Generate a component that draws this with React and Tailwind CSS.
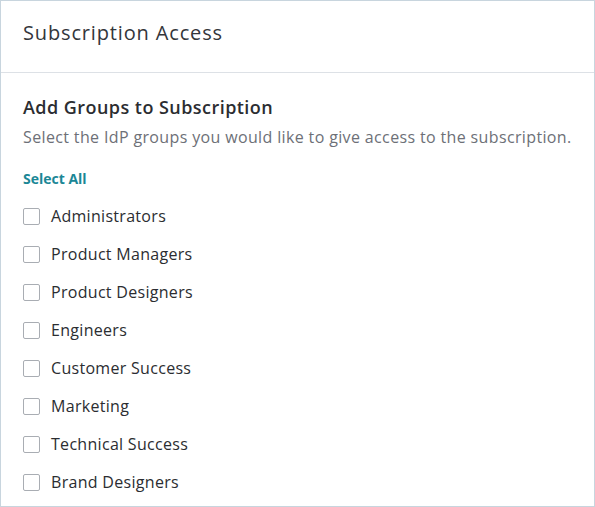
const groups = [
  'Administrators',
  'Product Managers',
  'Product Designers',
  'Engineers',
  'Customer Success',
  'Marketing',
  'Technical Success',
  'Brand Designers',
];

export default function App() {
  return (
    <div className="w-[595px] h-[507px] bg-white border border-[#c8d5de] text-[#2b2d31] overflow-hidden" style={{ fontFamily: '"Open Sans", "Noto Sans", sans-serif' }}>
      {/* Header */}
      <div className="h-[72px] px-[22px] flex items-center border-b border-[#dde1e6]">
        <h2 className="text-[20px] tracking-[0.85px] text-[#33363b] -mt-[8px]">Subscription Access</h2>
      </div>

      {/* Body */}
      <div className="pl-[22px] pr-[8px] pt-[21px]">
        <h3 className="text-[18px] font-semibold tracking-[0.45px] leading-[26px]">Add Groups to Subscription</h3>
        <p className="mt-[5px] text-[16px] tracking-[0.36px] leading-[24px] text-[#6d7077] whitespace-nowrap">
          Select the IdP groups you would like to give access to the subscription.
        </p>
        <button className="mt-[21px] text-[14px] font-bold leading-[18px] text-[#1b8796]">Select All</button>

        <ul className="mt-[7px]">
          {groups.map((g) => (
            <li key={g} className="h-[38px] flex items-center gap-[11px]">
              <span className="w-[17px] h-[17px] rounded-[2px] border border-[#a9adb3] bg-white" />
              <span className="text-[16px] tracking-[0.3px] text-[#2b2d31]">{g}</span>
            </li>
          ))}
        </ul>
      </div>
    </div>
  );
}
